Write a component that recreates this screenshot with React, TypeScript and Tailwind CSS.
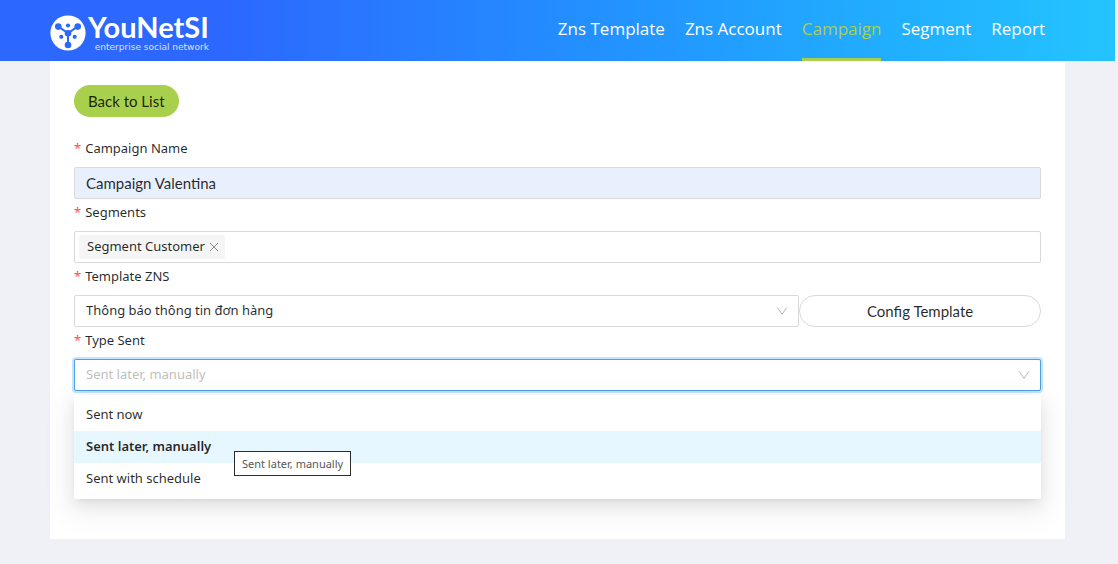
import { useState } from "react";

const navItems = [
  { name: "Zns Template", active: false },
  { name: "Zns Account", active: false },
  { name: "Campaign", active: true },
  { name: "Segment", active: false },
  { name: "Report", active: false },
];

const sentTypes = ["Sent now", "Sent later, manually", "Sent with schedule"];

function LogoMark() {
  return (
    <svg viewBox="0 0 36 36" className="size-9 shrink-0" aria-hidden="true">
      <circle cx="18" cy="18" r="17.6" fill="#fff" />
      <path d="M8.3 11.6 18 18l9.7-6.4M18 18v12" stroke="#2c67fe" strokeWidth="2" fill="none" />
      <g fill="#2c67fe">
        <circle cx="8.3" cy="11.6" r="3.3" />
        <circle cx="27.7" cy="11.6" r="3.3" />
        <circle cx="18" cy="30" r="3.3" />
        <circle cx="18" cy="18.2" r="3.3" />
        <circle cx="18" cy="10.5" r="2.1" />
        <circle cx="11.3" cy="21.8" r="2.1" />
        <circle cx="24.7" cy="21.8" r="2.1" />
      </g>
    </svg>
  );
}

function Arrow() {
  return (
    <svg
      viewBox="0 0 12 12"
      className="pointer-events-none absolute top-2.5 right-[11px] size-3"
      fill="none"
      stroke="#b5b5b5"
      aria-hidden="true"
    >
      <path d="M1.2 2.5 6 9.2l4.8-6.7" />
    </svg>
  );
}

function FieldLabel({ htmlFor, children }: { htmlFor: string; children: string }) {
  return (
    <label htmlFor={htmlFor} className="mb-1.5 flex items-center gap-1 leading-[26px]">
      <span className="text-[#ff4d4f]">*</span>
      {children}
    </label>
  );
}

export default function App() {
  const [name, setName] = useState("Campaign Valentina");
  const [segments, setSegments] = useState(["Segment Customer"]);
  const [sentType, setSentType] = useState("Sent later, manually");

  return (
    <div className="min-h-screen bg-[#eff1f6] pr-[3px] font-['Noto_Sans',sans-serif] text-[13px] text-black/85">
      <header className="flex h-[61px] items-center justify-between bg-linear-to-r from-[#2c67fe] from-20% to-[#24c4ff] pr-[70px] pl-[50px]">
        <a href="#" className="flex items-center gap-0.5 pt-1 text-white">
          <LogoMark />
          <span className="flex flex-col items-end">
            <span className="font-['Lato',sans-serif] text-[29px] leading-[29px] font-bold">YouNetSI</span>
            <span className="font-['DejaVu_Sans',sans-serif] text-[9px] leading-3 text-white/80">
              enterprise social network
            </span>
          </span>
        </a>
        <nav className="flex h-full gap-5 font-['Open_Sans',sans-serif] text-[17px]">
          {navItems.map((item) => (
            <a
              key={item.name}
              href="#"
              className={`flex h-full items-center border-b-3 ${
                item.active ? "border-[#a8d04d] text-[#a8d04d]" : "border-transparent text-white"
              }`}
            >
              {item.name}
            </a>
          ))}
        </nav>
      </header>

      <main className="mx-[50px] bg-white px-6 pt-6 pb-[148px]">
        <button
          type="button"
          className="mb-[18px] block h-8 rounded-full bg-[#a8d04d] px-3.5 font-['Lato',sans-serif] text-[15px]"
        >
          Back to List
        </button>

        <form>
          <FieldLabel htmlFor="name">Campaign Name</FieldLabel>
          <input
            id="name"
            value={name}
            onChange={(e) => setName(e.target.value)}
            className="block h-8 w-full rounded-xs border border-[#d9d9d9] bg-[#e8f0fe] px-[11px] font-['Lato',sans-serif] text-[15px]"
          />

          <FieldLabel htmlFor="segments">Segments</FieldLabel>
          <div className="flex h-8 items-center rounded-xs border border-[#d9d9d9] px-1">
            {segments.map((segment) => (
              <span key={segment} className="flex h-6 items-center gap-1 rounded-xs bg-[#f5f5f5] pr-1.5 pl-2">
                {segment}
                <button
                  type="button"
                  aria-label={`Remove ${segment}`}
                  onClick={() => setSegments(segments.filter((s) => s !== segment))}
                >
                  <svg viewBox="0 0 10 10" className="size-2.5" stroke="#8c8c8c" aria-hidden="true">
                    <path d="m1 1 8 8m0-8-8 8" />
                  </svg>
                </button>
              </span>
            ))}
            <input id="segments" className="h-6 min-w-0 flex-1 outline-none" />
          </div>

          <FieldLabel htmlFor="template">Template ZNS</FieldLabel>
          <div className="flex">
            <div className="relative w-3/4">
              <select
                id="template"
                className="block h-8 w-full appearance-none rounded-xs border border-[#d9d9d9] bg-white px-[11px]"
              >
                <option>Thông báo thông tin đơn hàng</option>
              </select>
              <Arrow />
            </div>
            <button
              type="button"
              className="h-8 w-1/4 rounded-full border border-[#d9d9d9] font-['Lato',sans-serif] text-[15px]"
            >
              Config Template
            </button>
          </div>

          <FieldLabel htmlFor="type">Type Sent</FieldLabel>
          <div className="relative">
            <select
              id="type"
              value={sentType}
              onChange={(e) => setSentType(e.target.value)}
              className="block h-8 w-full appearance-none rounded-xs border border-[#4f9fe3] bg-white px-[11px] text-[#bfbfbf] shadow-[0_0_0_2px_#c5e5ff] outline-none"
            >
              {sentTypes.map((type) => (
                <option key={type}>{type}</option>
              ))}
            </select>
            <Arrow />

            {/* Open option list */}
            <ul
              role="listbox"
              aria-label="Type Sent"
              className="absolute inset-x-0 top-full mt-1 rounded-xs bg-white py-1 shadow-[0_3px_6px_-4px_rgba(0,0,0,0.12),0_6px_16px_0_rgba(0,0,0,0.08),0_9px_28px_8px_rgba(0,0,0,0.05)]"
            >
              {sentTypes.map((type) => (
                <li
                  key={type}
                  role="option"
                  aria-selected={type === sentType}
                  onClick={() => setSentType(type)}
                  className={`flex h-8 cursor-pointer items-center px-3 ${
                    type === sentType ? "bg-[#e6f7ff] font-semibold" : ""
                  }`}
                >
                  {type}
                </li>
              ))}
            </ul>
            <div
              role="tooltip"
              className="absolute top-[92px] left-40 border border-[#2b2b2b] bg-white px-[7px] text-[11px] leading-[23px] text-[#575757]"
            >
              {sentType}
            </div>
          </div>
        </form>
      </main>
    </div>
  );
}
